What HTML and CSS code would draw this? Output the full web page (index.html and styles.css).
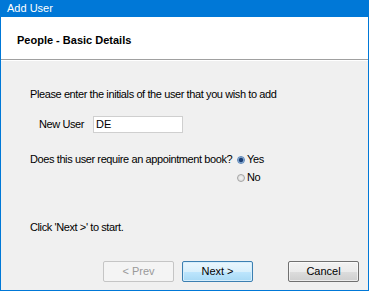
FILE: index.html
```html
<!DOCTYPE html>
<html>
<head>
<meta charset="utf-8">
<link rel="stylesheet" href="styles.css">
</head>
<body>
<div class="window">
  <div class="titlebar">Add User</div>
  <div class="header">People - Basic Details</div>
  <div class="content">
    <div class="intro">Please enter the initials of the user that you wish to add</div>
    <div class="field">
      <span class="label">New User</span>
      <div class="input">DE</div>
    </div>
    <div class="question">
      <span class="qtext">Does this user require an appointment book?</span>
      <div class="radios">
        <div class="radio-row"><span class="radio checked"></span><span>Yes</span></div>
        <div class="radio-row"><span class="radio"></span><span>No</span></div>
      </div>
    </div>
    <div class="hint">Click 'Next &gt;' to start.</div>
    <div class="buttons">
      <div class="btn disabled">&lt; Prev</div>
      <div class="btn primary">Next &gt;</div>
      <div class="btn cancel">Cancel</div>
    </div>
  </div>
</div>
</body>
</html>
```
FILE: styles.css
```css
html, body { margin: 0; padding: 0; }
body { width: 369px; height: 291px; overflow: hidden; font-family: "Liberation Sans", Arial, sans-serif; font-size: 11px; line-height: 13px; color: #000; }
.window { width: 369px; height: 291px; box-sizing: border-box; border: 1px solid #0078d7; border-top: 0; display: flex; flex-direction: column; background: #f0f0f0; }
.titlebar { background: #0078d7; color: #fff; height: 17px; line-height: 16px; padding-left: 7px; font-size: 11px; margin: 0 -1px; flex: none; }
.header { background: #fff; height: 43px; flex: none; box-sizing: border-box; border-bottom: 1px solid #a0a0a0; padding-left: 16px; padding-top: 4px; display: flex; align-items: center; font-weight: bold; box-shadow: 0 1px 0 #fff; }
.content { flex: 1; display: flex; flex-direction: column; padding-left: 29px; white-space: nowrap; letter-spacing: -0.4px; }
.intro { margin-top: 28px; }
.field { display: flex; align-items: center; margin-top: 15px; padding-left: 9px; }
.label { width: 54px; }
.input { width: 90px; height: 17px; box-sizing: border-box; border: 1px solid #cfcfcf; background: #fff; padding: 0 2px; line-height: 15px; letter-spacing: 0; }
.question { display: flex; margin-top: 20px; }
.qtext { width: 207px; }
.radios { display: flex; flex-direction: column; gap: 5px; }
.radio-row { display: flex; align-items: center; gap: 2px; }
.radio { width: 6px; height: 6px; border-radius: 50%; border: 1px solid #a4a4a4; background: radial-gradient(circle, #f6f6f6 0, #d4d4d4 100%); box-sizing: content-box; }
.radio.checked { background: radial-gradient(circle, #1c3f74 0 1.8px, #9ec0e6 2.8px); border-color: #5c86b6; }
.hint { margin-top: 37px; }
.buttons { display: flex; margin-top: 27px; margin-left: 73px; letter-spacing: 0; }
.btn { width: 71px; height: 21px; box-sizing: border-box; display: flex; align-items: center; justify-content: center; border: 1px solid #707070; border-radius: 2px; background: linear-gradient(#f2f2f2 0, #ebebeb 50%, #dddddd 51%, #cfcfcf 100%); box-shadow: inset 0 0 0 1px rgba(255,255,255,0.6); }
.btn.disabled { color: #9a9a9a; border-color: #c5c5c5; background: #f4f4f4; box-shadow: none; }
.btn.primary { margin-left: 8px; border-color: #3c7fb1; background: linear-gradient(#eaf6fd 0, #d9f0fc 50%, #bee6fd 51%, #a7d9f5 100%); box-shadow: inset 0 0 0 1px #d6eefc; }
.btn.cancel { margin-left: 35px; }
```
